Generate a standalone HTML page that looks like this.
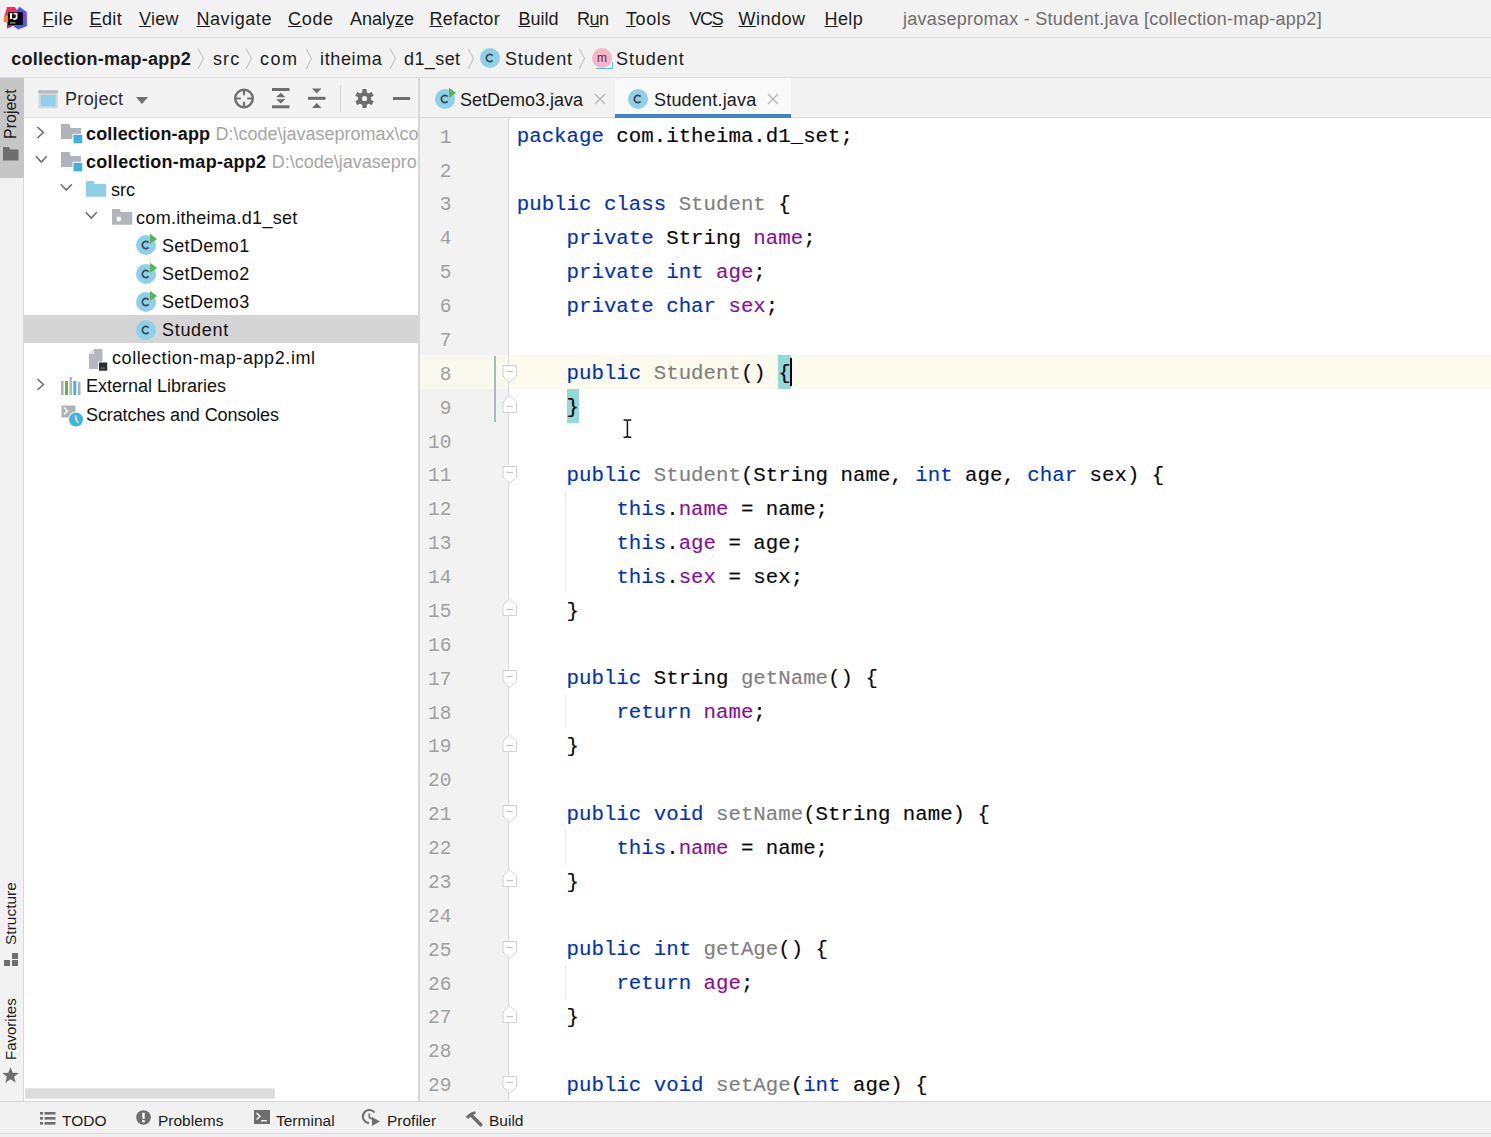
<!DOCTYPE html>
<html><head><meta charset="utf-8"><style>
*{margin:0;padding:0;box-sizing:border-box}
html,body{width:1491px;height:1137px;overflow:hidden;background:#f2f2f2;font-family:"Liberation Sans",sans-serif;color:#111}
.a{position:absolute}
svg{position:absolute;overflow:visible}
#menubar{position:absolute;left:0;top:0;width:1491px;height:38px;background:#f2f2f2;border-bottom:1px solid #dcdcdc}
.mi{position:absolute;top:8px;font-size:18px;line-height:22px;color:#1b1b1b;white-space:nowrap}
.mi u{text-decoration:underline;text-decoration-thickness:1.4px;text-underline-offset:1px}
#crumbs{position:absolute;left:0;top:38px;width:1491px;height:40px;background:#f2f2f2;border-bottom:1px solid #dcdcdc}
.c{position:absolute;top:48px;font-size:18px;line-height:22px;color:#1b1b1b;white-space:nowrap}
#strip{position:absolute;left:0;top:78px;width:24px;height:1023px;background:#f2f2f2;border-right:1px solid #dadada}
#panel{position:absolute;left:24px;top:78px;width:395px;height:1023px;background:#fff;overflow:hidden}
#phead{position:absolute;left:0;top:0;width:395px;height:40px;background:#f3f3f3;border-bottom:1px solid #e0e0e0}
#divider{position:absolute;left:418px;top:78px;width:2px;height:1023px;background:#d8d8d8}
#tabs{position:absolute;left:420px;top:78px;width:1071px;height:40px;background:#f2f2f2;border-bottom:1px solid #d9d9d9}
#editor{position:absolute;left:420px;top:118px;width:1071px;height:983px;background:#fff;overflow:hidden}
#gutter{position:absolute;left:0;top:0;width:89px;height:983px;background:#f2f2f2}
#bottombar{position:absolute;left:0;top:1101px;width:1491px;height:36px;background:#f1f1f1;border-top:1px solid #d6d6d6}
#bottombar .st{position:absolute;left:0;top:31px;width:1491px;height:5px;background:#efefef;border-top:1px solid #d9d9d9}
.t{position:absolute;margin-top:1px;font-size:18px;line-height:28.1px;height:28.1px;white-space:nowrap;color:#111}
.b{font-weight:bold}
.g{color:#a5a5a5}
.sel{position:absolute;left:0;width:395px;height:28.1px;background:#d5d5d5}
.code{position:absolute;left:96.75px;font-family:"Liberation Mono",monospace;font-size:20.75px;line-height:33.875px;height:33.875px;white-space:pre;color:#080808}
.code span.in{position:relative;top:2.3px;-webkit-text-stroke:0.15px currentColor}
.ln{position:absolute;left:0;width:31.5px;text-align:right;font-family:"Liberation Mono",monospace;font-size:19.5px;line-height:33.875px;height:33.875px;color:#a0a0a0}
.k{color:#0033b3}.f{color:#871094}.u{color:#808080}
.bt{position:absolute;top:9px;font-size:15.5px;line-height:18px;color:#1b1b1b;white-space:nowrap}
.vt{position:absolute;font-size:15.5px;line-height:18px;color:#1b1b1b;white-space:nowrap;transform-origin:0 0;transform:rotate(-90deg)}
</style></head><body>
<div id="menubar">
<svg style="left:0px;top:0px" width="36" height="36" viewBox="0 0 36 36">
<path d="M7 7 L15 7 L18 12 L18 17 L4.5 16 Z" fill="#fe2a62"/>
<path d="M4 15.5 L9 15.5 L9 23 L4 22 Z" fill="#fb8228"/>
<path d="M7 22 L13 22 L13 26 L7 28.5 Z" fill="#a11fb8"/>
<path d="M19.5 6.8 L26.5 12 L27 26 L18 29.5 L12 25 L17 10 Z" fill="#4b58ee"/>
<path d="M22 10 L26.5 12 L26.5 20 L22 20 Z" fill="#7548f0"/>
<rect x="8.2" y="12" width="14.6" height="13" fill="#000"/>
<rect x="10" y="13" width="2" height="6" fill="#fff"/><rect x="9.8" y="13" width="2.6" height="1.3" fill="#fff"/><rect x="9.8" y="17.8" width="2.6" height="1.3" fill="#fff"/>
<path d="M13.5 13.6 H16.6 V17.3 Q16.6 19 14.8 19 H13.2" stroke="#e8e8e8" stroke-width="1.8" fill="none"/>
<rect x="10.1" y="22.2" width="5.4" height="1.4" fill="#8a9a8a"/>
</svg>
<div class="mi" style="left:42.5px;letter-spacing:0.5px"><u>F</u>ile</div>
<div class="mi" style="left:89.5px;letter-spacing:0.4px"><u>E</u>dit</div>
<div class="mi" style="left:139px;letter-spacing:0.25px"><u>V</u>iew</div>
<div class="mi" style="left:196.5px;letter-spacing:0.55px"><u>N</u>avigate</div>
<div class="mi" style="left:288px;letter-spacing:0.7px"><u>C</u>ode</div>
<div class="mi" style="left:350px;letter-spacing:0px">Analy<u>z</u>e</div>
<div class="mi" style="left:429.5px;letter-spacing:0.3px"><u>R</u>efactor</div>
<div class="mi" style="left:518.5px;letter-spacing:0px"><u>B</u>uild</div>
<div class="mi" style="left:577px;letter-spacing:-0.5px">R<u>u</u>n</div>
<div class="mi" style="left:626px;letter-spacing:0.6px"><u>T</u>ools</div>
<div class="mi" style="left:689.5px;letter-spacing:-1.4px">VC<u>S</u></div>
<div class="mi" style="left:738.5px;letter-spacing:0.5px"><u>W</u>indow</div>
<div class="mi" style="left:824.5px;letter-spacing:0.4px"><u>H</u>elp</div>
<div class="mi" style="left:903px;color:#6e6e6e;letter-spacing:0.28px">javasepromax - Student.java [collection-map-app2]</div>
</div>
<div id="crumbs"></div>
<div class="c b" style="left:11.3px;letter-spacing:0.25px">collection-map-app2</div>
<svg style="left:197px;top:47.5px" width="8" height="22"><path d="M1 0.5 L6.5 10.5 L1 21" stroke="#c4c4c4" stroke-width="1.1" fill="none"/></svg>
<svg style="left:245px;top:47.5px" width="8" height="22"><path d="M1 0.5 L6.5 10.5 L1 21" stroke="#c4c4c4" stroke-width="1.1" fill="none"/></svg>
<svg style="left:305px;top:47.5px" width="8" height="22"><path d="M1 0.5 L6.5 10.5 L1 21" stroke="#c4c4c4" stroke-width="1.1" fill="none"/></svg>
<svg style="left:389px;top:47.5px" width="8" height="22"><path d="M1 0.5 L6.5 10.5 L1 21" stroke="#c4c4c4" stroke-width="1.1" fill="none"/></svg>
<svg style="left:467px;top:47.5px" width="8" height="22"><path d="M1 0.5 L6.5 10.5 L1 21" stroke="#c4c4c4" stroke-width="1.1" fill="none"/></svg>
<svg style="left:578px;top:47.5px" width="8" height="22"><path d="M1 0.5 L6.5 10.5 L1 21" stroke="#c4c4c4" stroke-width="1.1" fill="none"/></svg>
<div class="c" style="left:213px;letter-spacing:1.1px">src</div>
<div class="c" style="left:260px;letter-spacing:1.5px">com</div>
<div class="c" style="left:320px;letter-spacing:0.63px">itheima</div>
<div class="c" style="left:404px;letter-spacing:0.4px">d1_set</div>
<svg style="left:480px;top:48px" width="20" height="20" viewBox="0 0 20 20"><circle cx="10" cy="10" r="10" fill="#8fcfe9"/><path d="M12.6 7.6 A3.6 3.6 0 1 0 12.6 12.4" stroke="#3a4a55" stroke-width="1.7" fill="none"/></svg>
<div class="c" style="left:505px;letter-spacing:0.83px">Student</div>
<svg style="left:592px;top:48px" width="22" height="22" viewBox="0 0 22 22"><circle cx="10" cy="10" r="10" fill="#f4b6c9"/><text x="10" y="14" text-anchor="middle" font-family="Liberation Sans" font-size="12" fill="#5a2d3a">m</text><path d="M4 20.5 H20.5 V14" stroke="#5fb9d9" stroke-width="1" fill="none"/></svg>
<div class="c" style="left:616px;letter-spacing:0.95px">Student</div>
<div id="strip"><div class="a" style="left:0;top:0;width:24px;height:100px;background:#c6c6c6"></div></div>
<div class="vt" style="left:1.5px;top:139px;font-size:16px">Project</div>
<svg style="left:3px;top:147px" width="16" height="14"><path d="M0 0 H6 L7.5 2.5 H15.5 V13.5 H0 Z" fill="#6e6e6e"/></svg>
<div class="vt" style="left:2px;top:945px">Structure</div>
<svg style="left:4px;top:953px" width="14" height="14"><rect x="0" y="7" width="6" height="6" fill="#6e6e6e"/><rect x="8" y="7" width="6" height="6" fill="#6e6e6e"/><rect x="8" y="0" width="6" height="6" fill="#6e6e6e"/></svg>
<div class="vt" style="left:2px;top:1060px;font-size:15px">Favorites</div>
<svg style="left:1px;top:1066px" width="19" height="18" viewBox="0 0 24 24"><path d="M12 1.5 L15 9 L23 9.3 L16.8 14.3 L19 22.3 L12 17.8 L5 22.3 L7.2 14.3 L1 9.3 L9 9 Z" fill="#6e6e6e"/></svg>
<div id="panel"><div id="phead"></div>
<svg style="left:14px;top:12px" width="21" height="19"><rect x="0.3" y="0.3" width="19.6" height="18" fill="#d6d9dd"/><rect x="0.3" y="0.3" width="19.6" height="3.2" fill="#b7bbc1"/><rect x="2.6" y="5" width="15" height="11.3" fill="#8ed0ea"/></svg>
<div class="a" style="left:41px;top:10px;font-size:18px;line-height:22px;color:#2b2b2b;letter-spacing:0.35px">Project</div>
<svg style="left:111px;top:17.5px" width="14" height="9"><path d="M1 1 H13 L7 8 Z" fill="#6e6e6e"/></svg>
<svg style="left:208px;top:9px" width="24" height="24" viewBox="0 0 24 24"><circle cx="12" cy="11.5" r="8.8" stroke="#727272" stroke-width="2.5" fill="none"/><path d="M12 3 V8.3 M12 14.7 V20 M3.5 11.5 H8.8 M15.2 11.5 H20.5" stroke="#727272" stroke-width="2.2"/></svg>
<svg style="left:248px;top:10px" width="18" height="21"><rect x="0" y="0" width="17.5" height="3" fill="#6e6e6e"/><rect x="0" y="17.3" width="17.5" height="3" fill="#6e6e6e"/><path d="M4 9.2 L8.75 4.8 L13.5 9.2 Z M4 11.2 L8.75 15.6 L13.5 11.2 Z" fill="#6e6e6e"/></svg>
<svg style="left:284px;top:10px" width="18" height="21"><rect x="0" y="8.8" width="17.5" height="3" fill="#6e6e6e"/><path d="M4 0.5 L13.5 0.5 L8.75 5.5 Z M4 20 L13.5 20 L8.75 15 Z" fill="#6e6e6e"/></svg>
<div class="a" style="left:316px;top:7px;width:1px;height:27px;background:#d5d5d5"></div>
<svg style="left:330px;top:10px" width="21" height="21" viewBox="-10.5 -10.5 21 21"><g fill="#6e6e6e"><circle r="6.6"/><rect x="-2.2" y="-9.5" width="4.4" height="19" rx="0.8"/><rect x="-2.2" y="-9.5" width="4.4" height="19" rx="0.8" transform="rotate(60)"/><rect x="-2.2" y="-9.5" width="4.4" height="19" rx="0.8" transform="rotate(120)"/></g><circle r="2.6" fill="#f3f3f3"/></svg>
<div class="a" style="left:368.5px;top:19.2px;width:17px;height:3px;background:#6e6e6e"></div>
<div class="sel" style="top:237.2px"></div>
<svg style="left:12px;top:47.5px" width="10" height="13"><path d="M1.5 1 L7.3 6.5 L1.5 12" stroke="#6e6e6e" stroke-width="1.6" fill="none"/></svg>
<svg style="left:37px;top:46.0px" width="23" height="20"><path d="M0 0 H8.6 L9.6 4 H20 V15 H0 Z" fill="#afb3ba"/><rect x="11.5" y="9.8" width="10.5" height="10" fill="#fff"/><rect x="12.5" y="10.8" width="8.8" height="8.5" fill="#3fb1de"/></svg>
<div class="t b" style="left:62px;top:40.5px;letter-spacing:0.16px">collection-app <span class="g" style="font-weight:normal;letter-spacing:0;margin-left:0px">D:\code\javasepromax\collection-app</span></div>
<svg style="left:11px;top:76.6px" width="13" height="9"><path d="M0.8 1.2 L6.3 7 L11.8 1.2" stroke="#6e6e6e" stroke-width="1.6" fill="none"/></svg>
<svg style="left:37px;top:74.1px" width="23" height="20"><path d="M0 0 H8.6 L9.6 4 H20 V15 H0 Z" fill="#afb3ba"/><rect x="11.5" y="9.8" width="10.5" height="10" fill="#fff"/><rect x="12.5" y="10.8" width="8.8" height="8.5" fill="#3fb1de"/></svg>
<div class="t b" style="left:62px;top:68.6px;letter-spacing:0.28px">collection-map-app2 <span class="g" style="font-weight:normal;letter-spacing:0;margin-left:0px">D:\code\javasepromax\collection-map-app2</span></div>
<svg style="left:36px;top:104.7px" width="13" height="9"><path d="M0.8 1.2 L6.3 7 L11.8 1.2" stroke="#6e6e6e" stroke-width="1.6" fill="none"/></svg>
<svg style="left:61.5px;top:102.7px" width="21" height="16"><path d="M0 0 H7.8 L8.8 3 H20.2 V15.8 H0 Z" fill="#8dcfe6"/></svg>
<div class="t" style="left:87px;top:96.7px">src</div>
<svg style="left:61px;top:132.8px" width="13" height="9"><path d="M0.8 1.2 L6.3 7 L11.8 1.2" stroke="#6e6e6e" stroke-width="1.6" fill="none"/></svg>
<svg style="left:87.5px;top:130.8px" width="21" height="16"><path d="M0 0 H7.8 L8.8 3 H20.2 V15.8 H0 Z" fill="#b0b5bc"/><circle cx="6.9" cy="10" r="2.4" fill="#fff"/></svg>
<div class="t" style="left:112px;top:124.8px;letter-spacing:0.31px">com.itheima.d1_set</div>
<svg style="left:112.4px;top:157.4px" width="20" height="20" viewBox="0 0 20 20"><circle cx="10" cy="10" r="10" fill="#8fcfe9"/><path d="M12.6 7.6 A3.6 3.6 0 1 0 12.6 12.4" stroke="#3a4a55" stroke-width="1.7" fill="none"/><path d="M14 -1.2 L21.2 4 L14 8.8 Z" fill="#58b557"/></svg>
<div class="t" style="left:138px;top:152.9px;letter-spacing:0.3px">SetDemo1</div>
<svg style="left:112.4px;top:185.5px" width="20" height="20" viewBox="0 0 20 20"><circle cx="10" cy="10" r="10" fill="#8fcfe9"/><path d="M12.6 7.6 A3.6 3.6 0 1 0 12.6 12.4" stroke="#3a4a55" stroke-width="1.7" fill="none"/><path d="M14 -1.2 L21.2 4 L14 8.8 Z" fill="#58b557"/></svg>
<div class="t" style="left:138px;top:181.0px;letter-spacing:0.3px">SetDemo2</div>
<svg style="left:112.4px;top:213.6px" width="20" height="20" viewBox="0 0 20 20"><circle cx="10" cy="10" r="10" fill="#8fcfe9"/><path d="M12.6 7.6 A3.6 3.6 0 1 0 12.6 12.4" stroke="#3a4a55" stroke-width="1.7" fill="none"/><path d="M14 -1.2 L21.2 4 L14 8.8 Z" fill="#58b557"/></svg>
<div class="t" style="left:138px;top:209.1px;letter-spacing:0.3px">SetDemo3</div>
<svg style="left:112.4px;top:241.7px" width="20" height="20" viewBox="0 0 20 20"><circle cx="10" cy="10" r="10" fill="#8fcfe9"/><path d="M12.6 7.6 A3.6 3.6 0 1 0 12.6 12.4" stroke="#3a4a55" stroke-width="1.7" fill="none"/></svg>
<div class="t" style="left:138px;top:237.2px;letter-spacing:0.7px">Student</div>
<svg style="left:64.5px;top:270.8px" width="19" height="22"><path d="M5 0 H13.5 V20 H0 V5 Z" fill="#b3b8bf"/><path d="M5 0 V5 H0 Z" fill="#dfe2e5"/><rect x="9" y="12.5" width="9" height="9" fill="#fff"/><rect x="10" y="13.5" width="8.2" height="8.2" fill="#2b2b2b"/><rect x="11.8" y="18.5" width="4" height="1" fill="#888"/></svg>
<div class="t" style="left:88px;top:265.3px;letter-spacing:0.59px">collection-map-app2.iml</div>
<svg style="left:12px;top:300.4px" width="10" height="13"><path d="M1.5 1 L7.3 6.5 L1.5 12" stroke="#6e6e6e" stroke-width="1.6" fill="none"/></svg>
<svg style="left:37px;top:298.9px" width="22" height="19"><rect x="0" y="4" width="2.6" height="14" fill="#aeb3ba"/><rect x="4" y="4" width="3" height="14" fill="#62b543"/><rect x="8.5" y="0" width="2.4" height="18" fill="#aeb3ba"/><rect x="12.3" y="4" width="3" height="14" fill="#40b6e0"/><rect x="17" y="5" width="2.5" height="13" fill="#aeb3ba"/></svg>
<div class="t" style="left:62px;top:293.4px">External Libraries</div>
<svg style="left:36.5px;top:327.0px" width="24" height="24"><rect x="0.5" y="0.5" width="14" height="12" fill="#aeb3ba"/><path d="M3 2.5 L6.5 6 L3 9.5" stroke="#fff" stroke-width="1.4" fill="none"/><circle cx="15" cy="14.5" r="8" fill="#fff"/><circle cx="15" cy="14.5" r="7" fill="#3db3e0"/><path d="M14.2 10.5 L15.5 15.5 L17.5 17.8" stroke="#fff" stroke-width="1.4" fill="none"/></svg>
<div class="t" style="left:62px;top:321.5px;letter-spacing:-0.1px">Scratches and Consoles</div>
<div class="a" style="left:1px;top:1009.5px;width:250px;height:11px;background:#dcdcdc;border:1px solid #e6e6e6"></div>
</div>
<div id="divider"></div>
<div id="tabs"></div>
<svg style="left:435px;top:89px" width="20" height="20" viewBox="0 0 20 20"><circle cx="10" cy="10" r="10" fill="#8fcfe9"/><path d="M12.6 7.6 A3.6 3.6 0 1 0 12.6 12.4" stroke="#3a4a55" stroke-width="1.7" fill="none"/><path d="M14 -1.2 L21.2 4 L14 8.8 Z" fill="#58b557"/></svg>
<div class="a" style="left:460px;top:89px;font-size:18px;line-height:22px;color:#1b1b1b">SetDemo3.java</div>
<svg style="left:594px;top:93px" width="12" height="12"><path d="M1 1 L11 11 M11 1 L1 11" stroke="#b5b5b5" stroke-width="1.3"/></svg>
<div class="a" style="left:615px;top:78px;width:176px;height:40px;background:#f9f9f9"></div>
<div class="a" style="left:615px;top:113.5px;width:176px;height:4px;background:#4083c9"></div>
<svg style="left:628px;top:89px" width="20" height="20" viewBox="0 0 20 20"><circle cx="10" cy="10" r="10" fill="#8fcfe9"/><path d="M12.6 7.6 A3.6 3.6 0 1 0 12.6 12.4" stroke="#3a4a55" stroke-width="1.7" fill="none"/></svg>
<div class="a" style="left:654px;top:89px;font-size:18px;line-height:22px;color:#1b1b1b;letter-spacing:0.2px">Student.java</div>
<svg style="left:767px;top:93px" width="12" height="12"><path d="M1 1 L11 11 M11 1 L1 11" stroke="#b5b5b5" stroke-width="1.3"/></svg>
<div id="editor"><div id="gutter"></div>
<div class="a" style="left:0;top:237.12px;width:89px;height:33.875px;background:#faf9ed"></div>
<div class="a" style="left:89px;top:237.12px;width:982px;height:33.875px;background:#fcfaed"></div>
<div class="a" style="left:88px;top:0;width:1px;height:983px;background:#d9d9d9"></div>
<div class="a" style="left:73.5px;top:237.62px;width:2.5px;height:66.75px;background:#9dc0bf"></div>
<div class="a" style="left:144.5px;top:372.62px;width:1px;height:101.62px;background:#e8e8e8"></div>
<div class="a" style="left:144.5px;top:575.88px;width:1px;height:33.88px;background:#e8e8e8"></div>
<div class="a" style="left:144.5px;top:711.38px;width:1px;height:33.88px;background:#e8e8e8"></div>
<div class="a" style="left:144.5px;top:846.88px;width:1px;height:33.88px;background:#e8e8e8"></div>
<svg style="left:81.5px;top:246.62px" width="16" height="19"><path d="M1 0.5 H14.5 V11 L7.75 17.5 L1 11 Z" fill="#fff" stroke="#d2d2d2" stroke-width="1"/><path d="M4.5 6.5 H11" stroke="#c4c4c4" stroke-width="1.2"/></svg>
<svg style="left:81.5px;top:348.25px" width="16" height="19"><path d="M1 0.5 H14.5 V11 L7.75 17.5 L1 11 Z" fill="#fff" stroke="#d2d2d2" stroke-width="1"/><path d="M4.5 6.5 H11" stroke="#c4c4c4" stroke-width="1.2"/></svg>
<svg style="left:81.5px;top:551.50px" width="16" height="19"><path d="M1 0.5 H14.5 V11 L7.75 17.5 L1 11 Z" fill="#fff" stroke="#d2d2d2" stroke-width="1"/><path d="M4.5 6.5 H11" stroke="#c4c4c4" stroke-width="1.2"/></svg>
<svg style="left:81.5px;top:687.00px" width="16" height="19"><path d="M1 0.5 H14.5 V11 L7.75 17.5 L1 11 Z" fill="#fff" stroke="#d2d2d2" stroke-width="1"/><path d="M4.5 6.5 H11" stroke="#c4c4c4" stroke-width="1.2"/></svg>
<svg style="left:81.5px;top:822.50px" width="16" height="19"><path d="M1 0.5 H14.5 V11 L7.75 17.5 L1 11 Z" fill="#fff" stroke="#d2d2d2" stroke-width="1"/><path d="M4.5 6.5 H11" stroke="#c4c4c4" stroke-width="1.2"/></svg>
<svg style="left:81.5px;top:958.00px" width="16" height="19"><path d="M1 0.5 H14.5 V11 L7.75 17.5 L1 11 Z" fill="#fff" stroke="#d2d2d2" stroke-width="1"/><path d="M4.5 6.5 H11" stroke="#c4c4c4" stroke-width="1.2"/></svg>
<svg style="left:81.5px;top:277.00px" width="16" height="19"><path d="M1 17.5 H14.5 V7 L7.75 0.5 L1 7 Z" fill="#fff" stroke="#d2d2d2" stroke-width="1"/><path d="M4.5 11.5 H11" stroke="#c4c4c4" stroke-width="1.2"/></svg>
<svg style="left:81.5px;top:480.25px" width="16" height="19"><path d="M1 17.5 H14.5 V7 L7.75 0.5 L1 7 Z" fill="#fff" stroke="#d2d2d2" stroke-width="1"/><path d="M4.5 11.5 H11" stroke="#c4c4c4" stroke-width="1.2"/></svg>
<svg style="left:81.5px;top:615.75px" width="16" height="19"><path d="M1 17.5 H14.5 V7 L7.75 0.5 L1 7 Z" fill="#fff" stroke="#d2d2d2" stroke-width="1"/><path d="M4.5 11.5 H11" stroke="#c4c4c4" stroke-width="1.2"/></svg>
<svg style="left:81.5px;top:751.25px" width="16" height="19"><path d="M1 17.5 H14.5 V7 L7.75 0.5 L1 7 Z" fill="#fff" stroke="#d2d2d2" stroke-width="1"/><path d="M4.5 11.5 H11" stroke="#c4c4c4" stroke-width="1.2"/></svg>
<svg style="left:81.5px;top:886.75px" width="16" height="19"><path d="M1 17.5 H14.5 V7 L7.75 0.5 L1 7 Z" fill="#fff" stroke="#d2d2d2" stroke-width="1"/><path d="M4.5 11.5 H11" stroke="#c4c4c4" stroke-width="1.2"/></svg>
<div class="a" style="left:358.20px;top:237.12px;width:12.45px;height:33.875px;background:#93d9d9"></div>
<div class="a" style="left:146.55px;top:271.00px;width:12.45px;height:33.875px;background:#93d9d9"></div>
<div class="ln" style="top:0.00px"><span style="position:relative;top:3.7px">1</span></div>
<div class="ln" style="top:33.88px"><span style="position:relative;top:3.7px">2</span></div>
<div class="ln" style="top:67.75px"><span style="position:relative;top:3.7px">3</span></div>
<div class="ln" style="top:101.62px"><span style="position:relative;top:3.7px">4</span></div>
<div class="ln" style="top:135.50px"><span style="position:relative;top:3.7px">5</span></div>
<div class="ln" style="top:169.38px"><span style="position:relative;top:3.7px">6</span></div>
<div class="ln" style="top:203.25px"><span style="position:relative;top:3.7px">7</span></div>
<div class="ln" style="top:237.12px"><span style="position:relative;top:3.7px">8</span></div>
<div class="ln" style="top:271.00px"><span style="position:relative;top:3.7px">9</span></div>
<div class="ln" style="top:304.88px"><span style="position:relative;top:3.7px">10</span></div>
<div class="ln" style="top:338.75px"><span style="position:relative;top:3.7px">11</span></div>
<div class="ln" style="top:372.62px"><span style="position:relative;top:3.7px">12</span></div>
<div class="ln" style="top:406.50px"><span style="position:relative;top:3.7px">13</span></div>
<div class="ln" style="top:440.38px"><span style="position:relative;top:3.7px">14</span></div>
<div class="ln" style="top:474.25px"><span style="position:relative;top:3.7px">15</span></div>
<div class="ln" style="top:508.12px"><span style="position:relative;top:3.7px">16</span></div>
<div class="ln" style="top:542.00px"><span style="position:relative;top:3.7px">17</span></div>
<div class="ln" style="top:575.88px"><span style="position:relative;top:3.7px">18</span></div>
<div class="ln" style="top:609.75px"><span style="position:relative;top:3.7px">19</span></div>
<div class="ln" style="top:643.62px"><span style="position:relative;top:3.7px">20</span></div>
<div class="ln" style="top:677.50px"><span style="position:relative;top:3.7px">21</span></div>
<div class="ln" style="top:711.38px"><span style="position:relative;top:3.7px">22</span></div>
<div class="ln" style="top:745.25px"><span style="position:relative;top:3.7px">23</span></div>
<div class="ln" style="top:779.12px"><span style="position:relative;top:3.7px">24</span></div>
<div class="ln" style="top:813.00px"><span style="position:relative;top:3.7px">25</span></div>
<div class="ln" style="top:846.88px"><span style="position:relative;top:3.7px">26</span></div>
<div class="ln" style="top:880.75px"><span style="position:relative;top:3.7px">27</span></div>
<div class="ln" style="top:914.62px"><span style="position:relative;top:3.7px">28</span></div>
<div class="ln" style="top:948.50px"><span style="position:relative;top:3.7px">29</span></div>
<div class="code" style="top:0.00px"><span class="in"><span class="k">package</span> com.itheima.d1_set;</span></div>
<div class="code" style="top:33.88px"><span class="in"></span></div>
<div class="code" style="top:67.75px"><span class="in"><span class="k">public class</span> <span class="u">Student</span> {</span></div>
<div class="code" style="top:101.62px"><span class="in">    <span class="k">private</span> String <span class="f">name</span>;</span></div>
<div class="code" style="top:135.50px"><span class="in">    <span class="k">private int</span> <span class="f">age</span>;</span></div>
<div class="code" style="top:169.38px"><span class="in">    <span class="k">private char</span> <span class="f">sex</span>;</span></div>
<div class="code" style="top:203.25px"><span class="in"></span></div>
<div class="code" style="top:237.12px"><span class="in">    <span class="k">public</span> <span class="u">Student</span>() {</span></div>
<div class="code" style="top:271.00px"><span class="in">    }</span></div>
<div class="code" style="top:304.88px"><span class="in"></span></div>
<div class="code" style="top:338.75px"><span class="in">    <span class="k">public</span> <span class="u">Student</span>(String name, <span class="k">int</span> age, <span class="k">char</span> sex) {</span></div>
<div class="code" style="top:372.62px"><span class="in">        <span class="k">this</span>.<span class="f">name</span> = name;</span></div>
<div class="code" style="top:406.50px"><span class="in">        <span class="k">this</span>.<span class="f">age</span> = age;</span></div>
<div class="code" style="top:440.38px"><span class="in">        <span class="k">this</span>.<span class="f">sex</span> = sex;</span></div>
<div class="code" style="top:474.25px"><span class="in">    }</span></div>
<div class="code" style="top:508.12px"><span class="in"></span></div>
<div class="code" style="top:542.00px"><span class="in">    <span class="k">public</span> String <span class="u">getName</span>() {</span></div>
<div class="code" style="top:575.88px"><span class="in">        <span class="k">return</span> <span class="f">name</span>;</span></div>
<div class="code" style="top:609.75px"><span class="in">    }</span></div>
<div class="code" style="top:643.62px"><span class="in"></span></div>
<div class="code" style="top:677.50px"><span class="in">    <span class="k">public void</span> <span class="u">setName</span>(String name) {</span></div>
<div class="code" style="top:711.38px"><span class="in">        <span class="k">this</span>.<span class="f">name</span> = name;</span></div>
<div class="code" style="top:745.25px"><span class="in">    }</span></div>
<div class="code" style="top:779.12px"><span class="in"></span></div>
<div class="code" style="top:813.00px"><span class="in">    <span class="k">public int</span> <span class="u">getAge</span>() {</span></div>
<div class="code" style="top:846.88px"><span class="in">        <span class="k">return</span> <span class="f">age</span>;</span></div>
<div class="code" style="top:880.75px"><span class="in">    }</span></div>
<div class="code" style="top:914.62px"><span class="in"></span></div>
<div class="code" style="top:948.50px"><span class="in">    <span class="k">public void</span> <span class="u">setAge</span>(<span class="k">int</span> age) {</span></div>
<div class="a" style="left:369.65px;top:240.43px;width:2px;height:28px;background:#000"></div>
<svg style="left:203px;top:301px" width="10" height="20"><path d="M0.5 1 H3.3 L4.4 1.9 L5.5 1 H8.3 M4.4 1.9 V17.3 M0.5 18.2 H3.3 L4.4 17.3 L5.5 18.2 H8.3" stroke="#111" stroke-width="1.5" fill="none"/></svg>
</div>
<div id="bottombar"><div class="st"></div></div>
<svg style="left:40px;top:1112px" width="16" height="13"><g fill="#6e6e6e"><rect x="0" y="0" width="3" height="2.6"/><rect x="4.5" y="0" width="11" height="2.6"/><rect x="0" y="5" width="3" height="2.6"/><rect x="4.5" y="5" width="11" height="2.6"/><rect x="0" y="10" width="3" height="2.6"/><rect x="4.5" y="10" width="11" height="2.6"/></g></svg>
<div class="bt" style="left:62px;top:1111.5px">TODO</div>
<svg style="left:136px;top:1110px" width="15" height="15"><circle cx="7.5" cy="7.5" r="7.3" fill="#6e6e6e"/><rect x="6.3" y="2.8" width="2.4" height="6" fill="#fff"/><rect x="6.3" y="10" width="2.4" height="2.3" fill="#fff"/></svg>
<div class="bt" style="left:158px;top:1111.5px">Problems</div>
<svg style="left:254px;top:1110px" width="16" height="15"><rect x="0" y="0" width="16" height="14" fill="#6e6e6e"/><path d="M2.5 3 L6 6.2 L2.5 9.4" stroke="#fff" stroke-width="1.4" fill="none"/><rect x="7" y="10" width="6" height="1.4" fill="#fff"/></svg>
<div class="bt" style="left:276px;top:1111.5px">Terminal</div>
<svg style="left:362px;top:1109px" width="20" height="18"><path d="M12.5 3.5 A6.5 6.5 0 1 0 7 14" stroke="#6e6e6e" stroke-width="2" fill="none"/><path d="M7.3 4.5 V8.5 L9.8 10" stroke="#6e6e6e" stroke-width="1.6" fill="none"/><path d="M10 8 L18 12.5 L10 17 Z" fill="#6e6e6e"/></svg>
<div class="bt" style="left:387px;top:1111.5px">Profiler</div>
<svg style="left:464px;top:1110px" width="20" height="17"><path d="M7.5 5.5 L16.8 14.8" stroke="#6e6e6e" stroke-width="3.6" stroke-linecap="round"/><path d="M1.8 7 Q5 2.5 11 1.2 L12 3.5 Q7 5 4.5 9 Z" fill="#6e6e6e"/></svg>
<div class="bt" style="left:489px;top:1111.5px">Build</div>
</body></html>
